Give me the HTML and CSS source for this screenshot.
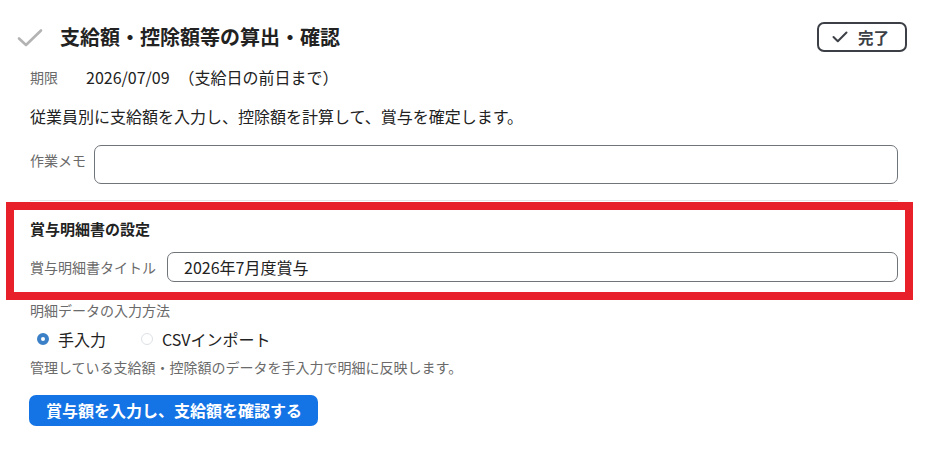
FILE: index.html
```html
<!DOCTYPE html>
<html lang="ja">
<head>
<meta charset="utf-8">
<link rel="stylesheet" href="styles.css">
</head>
<body>
<div class="page">
  <div class="header">
    <svg class="head-check" width="26" height="20" viewBox="0 0 26 20"><path d="M2 10.5 L9 17 L24 2.5" fill="none" stroke="#b3b3b3" stroke-width="2.6" stroke-linecap="round" stroke-linejoin="round"/></svg>
    <h1 class="title">支給額・控除額等の算出・確認</h1>
    <button class="done-btn"><svg width="16" height="12" viewBox="0 0 16 12"><path d="M1.5 6 L5.8 10.2 L14.5 1.5" fill="none" stroke="#3c4046" stroke-width="2" stroke-linecap="round" stroke-linejoin="round"/></svg><span>完了</span></button>
  </div>
  <div class="content">
    <div class="deadline"><span class="small-label">期限</span><span class="deadline-value">2026/07/09<span class="paren">（支給日の前日まで）</span></span></div>
    <p class="desc">従業員別に支給額を入力し、控除額を計算して、賞与を確定します。</p>
    <div class="memo-row"><span class="small-label memo-label">作業メモ</span><div class="memo-input"></div></div>
    <div class="divider"></div>
    <div class="highlight">
      <div class="section-title">賞与明細書の設定</div>
      <div class="title-row"><span class="small-label">賞与明細書タイトル</span><div class="text-input">2026年7月度賞与</div></div>
    </div>
    <div class="small-label method-label">明細データの入力方法</div>
    <div class="radios">
      <label class="radio"><span class="dot on"></span>手入力</label>
      <label class="radio"><span class="dot"></span>CSVインポート</label>
    </div>
    <div class="small-label method-desc">管理している支給額・控除額のデータを手入力で明細に反映します。</div>
    <button class="primary">賞与額を入力し、支給額を確認する</button>
  </div>
</div>
</body>
</html>
```
FILE: styles.css
```css
* { box-sizing: border-box; }
body {
  margin: 0;
  background: #fff;
  font-family: "Noto Sans CJK JP", "Noto Sans", sans-serif;
  color: #222;
}
.page { width: 927px; height: 464px; overflow: hidden; }
.header {
  display: flex;
  align-items: center;
  height: 30px;
  margin-top: 22px;
  padding: 0 20px 0 17px;
}
.head-check { margin-top: 2px; }
.title {
  margin: 0 0 0 17px;
  font-size: 20px;
  font-weight: 700;
  line-height: 30px;
  flex: 1;
  color: #222;
}
.done-btn {
  display: flex;
  align-items: center;
  gap: 10px;
  width: 90px;
  height: 30px;
  padding: 0 0 0 13px;
  border: 2px solid #3c4046;
  border-radius: 7px;
  background: #fff;
  font-family: inherit;
  font-size: 15.5px;
  font-weight: 700;
  color: #3c4046;
}
.content { padding: 0 29px 0 30px; }
.small-label { font-size: 14px; color: #6a6a6a; line-height: 18px; }
.deadline { display: flex; align-items: center; margin-top: 15px; height: 20px; }
.deadline-value { margin-left: 28px; font-size: 16px; line-height: 20px; color: #222; }
.paren { margin-left: 9px; }
.desc { margin: 18px 0 0; font-size: 16px; line-height: 22px; color: #222; }
.memo-row { display: flex; align-items: flex-start; margin-top: 18px; gap: 8px; }
.memo-label { padding-top: 6px; }
.memo-input {
  flex: 1;
  height: 39px;
  border: 1px solid #70757a;
  border-radius: 7px;
}
.divider { height: 1px; background: #e2e4e6; margin-top: 16px; }
.highlight {
  margin: 1px -15px 0 -24px;
  border: 8px solid #e8202a;
  padding: 8px 7px 10px 16px;
}
.section-title { font-size: 15px; font-weight: 700; line-height: 22px; color: #222; }
.title-row { display: flex; align-items: center; gap: 11px; margin-top: 12px; }
.text-input {
  flex: 1;
  height: 30px;
  border: 1px solid #70757a;
  border-radius: 7px;
  padding-left: 16px;
  font-size: 16px;
  line-height: 28px;
  color: #222;
}
.method-label { margin-top: 1px; }
.radios { display: flex; align-items: center; gap: 35px; margin-top: 9px; padding-left: 7px; height: 22px; }
.radio { display: flex; align-items: center; font-size: 16px; line-height: 22px; color: #222; }
.dot {
  width: 12px; height: 12px;
  border-radius: 50%;
  border: 1px solid #dde1e5;
  margin-right: 9px;
  background: #fff;
}
.dot.on { border: 4px solid #3b7fc6; }
.method-desc { margin-top: 8px; }
.primary {
  display: block;
  margin: 19px 0 0 -1px;
  height: 31px;
  padding: 0 16px 0 17px;
  border: none;
  border-radius: 7px;
  background: #1474e6;
  color: #fff;
  font-family: inherit;
  font-size: 16px;
  font-weight: 700;
  line-height: 31px;
}
```
